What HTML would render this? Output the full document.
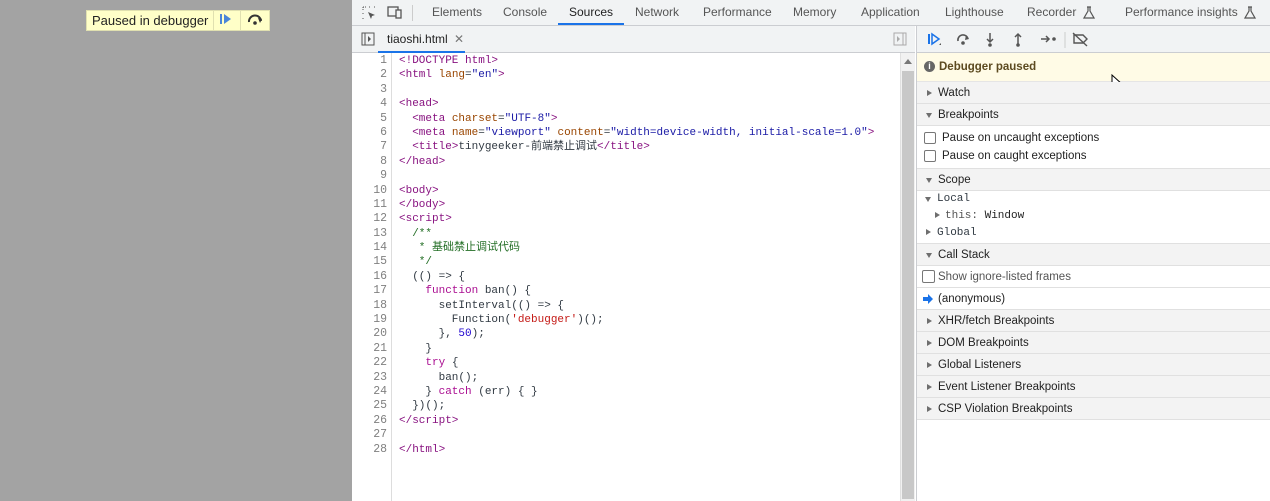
<!DOCTYPE html>
<html><head><meta charset="utf-8"><style>
*{margin:0;padding:0;box-sizing:border-box}
body{width:1270px;height:501px;overflow:hidden;background:#a3a3a3;font-family:"Liberation Sans","Noto Sans CJK SC",sans-serif;font-size:12px;color:#303942;position:relative}
.badge{position:absolute;left:86px;top:10px;height:21px;background:#ffffc8;border:1px solid #e0e0b0;display:flex;align-items:center;font-size:13px;color:#222}
.badge span{padding:0 5px}
.badge i{width:1px;height:19px;background:#e0e0b0}
.dt{position:absolute;left:352px;top:0;width:918px;height:501px;background:#fff}
.tabs{height:26px;background:#f1f3f4;border-bottom:1px solid #cbcdd1;position:relative;font-size:12px;color:#555}
.tabs .l{position:absolute;top:0;height:25px;line-height:25px}
.tabs .act{color:#1f1f1f;border-bottom:2px solid #1a73e8;padding:0 11px;margin-left:-11px}
.ftab{position:absolute;left:0;top:26px;width:563px;height:27px;background:#f1f3f4;border-bottom:1px solid #cbcdd1}
.code{position:absolute;left:0;top:53px;width:548px;height:448px;font-family:"Liberation Mono","Noto Sans CJK SC",monospace;font-size:11px}
.gut{position:absolute;left:0;top:0;width:40px;height:448px;border-right:1px solid #ddd;color:#808080;text-align:right;padding-right:4px;padding-top:1px;font-size:11.5px}
.lines{position:absolute;left:47px;top:1px;white-space:pre;color:#303942}
.gut div,.lines div{height:14.4px;line-height:14.4px}
.t{color:#881280}.a{color:#994500}.s{color:#1a1aa6}.k{color:#aa0d91}.c{color:#236e25}.n{color:#1c00cf}.st{color:#c41a16}
.vsb{position:absolute;left:548px;top:53px;width:15px;height:448px;background:#f1f1f1;border-left:1px solid #e0e0e0}
.rp{position:absolute;left:564px;top:26px;width:354px;height:475px;border-left:1px solid #cbcdd1;background:#fff;font-size:11.5px}
.tb{height:27px;background:#f1f3f4;border-bottom:1px solid #cbcdd1;position:relative}
.paused{height:29px;background:#fffbe6;border-bottom:1px solid #e5e5e5;font-weight:bold;color:#5c4a20;line-height:29px;padding-left:22px;position:relative}
.hd{height:22px;line-height:22px;background:#f3f3f3;border-bottom:1px solid #e0e0e0;padding-left:21px;position:relative;color:#222}
.hd:before{content:"";position:absolute;left:10px;top:8px;border-left:5px solid #6e6e6e;border-top:3.5px solid transparent;border-bottom:3.5px solid transparent}
.hd.o:before{left:9px;top:9px;border-top:5px solid #6e6e6e;border-left:3.5px solid transparent;border-right:3.5px solid transparent;border-bottom:0}
.row{height:18px;line-height:18px;padding-left:25px;position:relative;color:#222}
.cb{position:absolute;left:7px;top:3px;width:12px;height:12px;border:1px solid #777;border-radius:2px;background:#fff}
.mono{font-family:"Liberation Mono",monospace;font-size:11px}
</style></head><body>
<div class="badge"><span>Paused in debugger</span><i></i><span><svg width="16" height="12"><rect x="1" y="1" width="2" height="10" fill="#4a86d8"/><path d="M5 1L12 6L5 11Z" fill="#4a86d8"/></svg></span><i></i><span><svg width="18" height="12"><path d="M3 9A6 6 0 0 1 15 8" stroke="#333" stroke-width="2" fill="none"/><path d="M12 5l4 1-2 4z" fill="#333"/><circle cx="9" cy="10" r="1.8" fill="#333"/></svg></span></div>
<div class="dt">
<div class="tabs">
<svg style="position:absolute;left:9px;top:5px" width="16" height="16"><path d="M2 2h3M2 2v3M2 8v2M2 13v1h1M8 2h2M13 2h1v1" stroke="#555" stroke-dasharray="1 1" fill="none"/><path d="M7 7l7 3-3 1-1 3z" fill="#555"/></svg>
<svg style="position:absolute;left:35px;top:5px" width="16" height="14"><rect x="1" y="2" width="10" height="9" fill="none" stroke="#555" stroke-width="1.3"/><rect x="9" y="5" width="5" height="8" fill="#f1f3f4" stroke="#555" stroke-width="1.3"/></svg>
<div style="position:absolute;left:60px;top:5px;width:1px;height:16px;background:#ccc"></div>
<div class="l" style="left:80px">Elements</div><div class="l" style="left:151px">Console</div><div class="l act" style="left:217px">Sources</div><div class="l" style="left:283px">Network</div><div class="l" style="left:351px">Performance</div><div class="l" style="left:441px">Memory</div><div class="l" style="left:509px">Application</div><div class="l" style="left:593px">Lighthouse</div><div class="l" style="left:675px">Recorder</div><div class="l" style="left:773px">Performance insights</div>
<svg style="position:absolute;left:731px;top:6px" width="12" height="13"><path d="M4 1h4M5 1v4L1 12h10L7 5V1" fill="none" stroke="#555" stroke-width="1.2"/></svg>
<svg style="position:absolute;left:892px;top:6px" width="12" height="13"><path d="M4 1h4M5 1v4L1 12h10L7 5V1" fill="none" stroke="#555" stroke-width="1.2"/></svg>
</div>
<div class="ftab">
<svg style="position:absolute;left:9px;top:6px" width="14" height="14"><rect x="1" y="1" width="12" height="12" fill="none" stroke="#555"/><path d="M4 1v12" stroke="#555"/><path d="M7 4l3 3-3 3z" fill="#555"/></svg>
<div style="position:absolute;left:26px;top:0;width:87px;height:27px;line-height:26px;padding-left:9px;border-bottom:2px solid #1a73e8;color:#222">tiaoshi.html <span style="color:#777;margin-left:3px">✕</span></div>
<svg style="position:absolute;left:541px;top:6px" width="14" height="14"><rect x="1" y="1" width="12" height="12" fill="none" stroke="#aaa"/><path d="M10 1v12" stroke="#aaa"/><path d="M4 4l3 3-3 3z" fill="#aaa"/></svg>
</div>
<div class="code">
<div class="gut"><div>1</div><div>2</div><div>3</div><div>4</div><div>5</div><div>6</div><div>7</div><div>8</div><div>9</div><div>10</div><div>11</div><div>12</div><div>13</div><div>14</div><div>15</div><div>16</div><div>17</div><div>18</div><div>19</div><div>20</div><div>21</div><div>22</div><div>23</div><div>24</div><div>25</div><div>26</div><div>27</div><div>28</div></div>
<div class="lines"><div><span class="t">&lt;!DOCTYPE html&gt;</span></div><div><span class="t">&lt;html</span> <span class="a">lang</span>=<span class="s">"en"</span><span class="t">&gt;</span></div><div> </div><div><span class="t">&lt;head&gt;</span></div><div>  <span class="t">&lt;meta</span> <span class="a">charset</span>=<span class="s">"UTF-8"</span><span class="t">&gt;</span></div><div>  <span class="t">&lt;meta</span> <span class="a">name</span>=<span class="s">"viewport"</span> <span class="a">content</span>=<span class="s">"width=device-width, initial-scale=1.0"</span><span class="t">&gt;</span></div><div>  <span class="t">&lt;title&gt;</span>tinygeeker-前端禁止调试<span class="t">&lt;/title&gt;</span></div><div><span class="t">&lt;/head&gt;</span></div><div> </div><div><span class="t">&lt;body&gt;</span></div><div><span class="t">&lt;/body&gt;</span></div><div><span class="t">&lt;script&gt;</span></div><div class="c">  /**</div><div class="c">   * 基础禁止调试代码</div><div class="c">   */</div><div>  (() =&gt; {</div><div>    <span class="k">function</span> ban() {</div><div>      setInterval(() =&gt; {</div><div>        Function(<span class="st">'debugger'</span>)();</div><div>      }, <span class="n">50</span>);</div><div>    }</div><div>    <span class="k">try</span> {</div><div>      ban();</div><div>    } <span class="k">catch</span> (err) { }</div><div>  })();</div><div><span class="t">&lt;/script&gt;</span></div><div> </div><div><span class="t">&lt;/html&gt;</span></div></div>
</div>
<div class="vsb"><div style="position:absolute;left:3px;top:6px;border-bottom:5px solid #777;border-left:4px solid transparent;border-right:4px solid transparent"></div><div style="position:absolute;left:1px;top:18px;width:12px;height:428px;background:#c8c8c8"></div></div>
<div class="rp">
<div class="tb"><svg width="190" height="27" style="position:absolute;left:8px;top:0">
<rect x="3" y="8" width="2" height="10" fill="#1a73e8"/><path d="M7 8l7 5-7 5z" fill="none" stroke="#1a73e8" stroke-width="1.5"/><path d="M14 19l2-2v2z" fill="#555"/>
<path d="M33 15a5 5 0 0 1 10-2" stroke="#555" stroke-width="1.6" fill="none"/><path d="M41 9l3 4-4 1z" fill="#555"/><circle cx="38" cy="17" r="1.8" fill="#555"/>
<path d="M65 7v9" stroke="#555" stroke-width="1.5"/><path d="M62 13l3 3 3-3" stroke="#555" stroke-width="1.5" fill="none"/><circle cx="65" cy="19" r="1.8" fill="#555"/>
<path d="M93 9v9" stroke="#555" stroke-width="1.5"/><path d="M90 11l3-3 3 3" stroke="#555" stroke-width="1.5" fill="none"/><circle cx="93" cy="19" r="1.8" fill="#555"/>
<path d="M116 13h8" stroke="#555" stroke-width="1.5"/><path d="M121 10l3 3-3 3" stroke="#555" stroke-width="1.5" fill="none"/><circle cx="129" cy="13" r="1.8" fill="#555"/>
<path d="M140 6v16" stroke="#ccc"/>
<path d="M149 9h9l4 4-4 4h-9z" fill="none" stroke="#555" stroke-width="1.4"/><path d="M148 7l14 13" stroke="#555" stroke-width="1.4"/>
</svg></div>
<div class="paused"><span style="position:absolute;left:7px;top:8px;width:11px;height:11px;border-radius:50%;background:#666;color:#fff;font-size:9px;line-height:11px;text-align:center">i</span>Debugger paused
<svg style="position:absolute;left:194px;top:21px" width="14" height="20"><path d="M1 1v15l4-4 3 6 2-1-3-6h5z" fill="#fff" stroke="#000"/></svg></div>
<div class="hd">Watch</div>
<div class="hd o">Breakpoints</div>
<div style="height:43px;border-bottom:1px solid #e0e0e0;padding-top:3px"><div class="row"><span class="cb"></span>Pause on uncaught exceptions</div><div class="row"><span class="cb"></span>Pause on caught exceptions</div></div>
<div class="hd o">Scope</div>
<div style="height:53px;border-bottom:1px solid #e0e0e0;padding-top:1px;position:relative" class="mono">
<div style="position:absolute;left:8px;top:6px;border-top:5px solid #6e6e6e;border-left:3.5px solid transparent;border-right:3.5px solid transparent"></div><div style="position:absolute;left:20px;top:2px">Local</div>
<div style="position:absolute;left:18px;top:21px;border-left:5px solid #6e6e6e;border-top:3.5px solid transparent;border-bottom:3.5px solid transparent"></div><div style="position:absolute;left:28px;top:19px;color:#555">this: <span style="color:#222">Window</span></div>
<div style="position:absolute;left:9px;top:38px;border-left:5px solid #6e6e6e;border-top:3.5px solid transparent;border-bottom:3.5px solid transparent"></div><div style="position:absolute;left:20px;top:36px">Global</div>
</div>
<div class="hd o">Call Stack</div>
<div style="height:22px;border-bottom:1px solid #e0e0e0;line-height:22px;padding-left:21px;position:relative;color:#555"><span class="cb" style="left:5px;top:4px;width:13px;height:13px"></span>Show ignore-listed frames</div>
<div style="height:22px;border-bottom:1px solid #e0e0e0;line-height:22px;padding-left:21px;position:relative;color:#222"><svg style="position:absolute;left:6px;top:6px" width="10" height="10"><path d="M0 3h5V0l5 5-5 5V7H0z" fill="#1a73e8"/></svg>(anonymous)</div>
<div class="hd">XHR/fetch Breakpoints</div>
<div class="hd">DOM Breakpoints</div>
<div class="hd">Global Listeners</div>
<div class="hd">Event Listener Breakpoints</div>
<div class="hd">CSP Violation Breakpoints</div>
</div>
</div>
</body></html>
